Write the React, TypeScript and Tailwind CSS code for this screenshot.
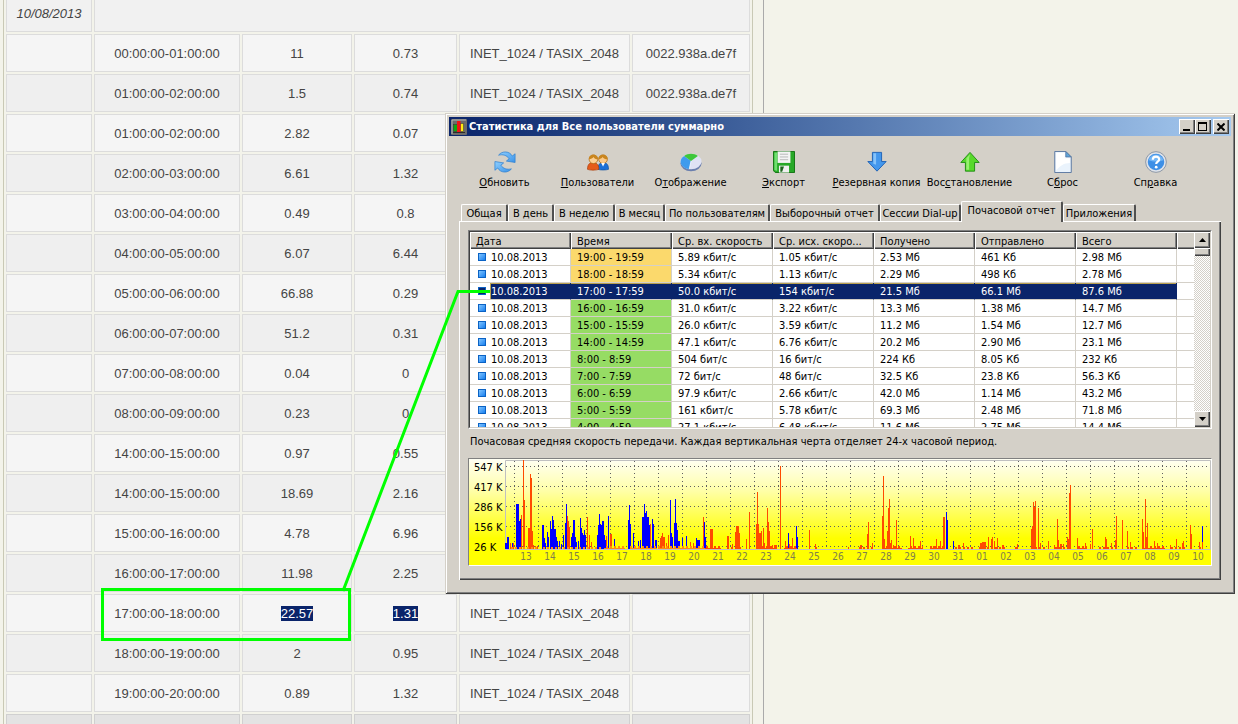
import { useState } from "react";
import type { ReactNode } from "react";

type TrafficRow = {
  time: string;
  incoming: string;
  outgoing: string;
  tariff?: string;
  mac?: string;
  selected?: boolean;
};

const TARIFF = "INET_1024 / TASIX_2048";

const trafficRows: TrafficRow[] = [
  { time: "00:00:00-01:00:00", incoming: "11", outgoing: "0.73", tariff: TARIFF, mac: "0022.938a.de7f" },
  { time: "01:00:00-02:00:00", incoming: "1.5", outgoing: "0.74", tariff: TARIFF, mac: "0022.938a.de7f" },
  { time: "01:00:00-02:00:00", incoming: "2.82", outgoing: "0.07" },
  { time: "02:00:00-03:00:00", incoming: "6.61", outgoing: "1.32" },
  { time: "03:00:00-04:00:00", incoming: "0.49", outgoing: "0.8" },
  { time: "04:00:00-05:00:00", incoming: "6.07", outgoing: "6.44" },
  { time: "05:00:00-06:00:00", incoming: "66.88", outgoing: "0.29" },
  { time: "06:00:00-07:00:00", incoming: "51.2", outgoing: "0.31" },
  { time: "07:00:00-08:00:00", incoming: "0.04", outgoing: "0" },
  { time: "08:00:00-09:00:00", incoming: "0.23", outgoing: "0" },
  { time: "14:00:00-15:00:00", incoming: "0.97", outgoing: "0.55" },
  { time: "14:00:00-15:00:00", incoming: "18.69", outgoing: "2.16" },
  { time: "15:00:00-16:00:00", incoming: "4.78", outgoing: "6.96" },
  { time: "16:00:00-17:00:00", incoming: "11.98", outgoing: "2.25" },
  { time: "17:00:00-18:00:00", incoming: "22.57", outgoing: "1.31", tariff: TARIFF, selected: true },
  { time: "18:00:00-19:00:00", incoming: "2", outgoing: "0.95", tariff: TARIFF },
  { time: "19:00:00-20:00:00", incoming: "0.89", outgoing: "1.32", tariff: TARIFF },
];

const reportColumns = ["Дата", "Время", "Ср. вх. скорость", "Ср. исх. скоро...", "Получено", "Отправлено", "Всего"];

const reportRows = [
  ["10.08.2013", "19:00 - 19:59", "5.89 кбит/с", "1.05 кбит/с", "2.53 Мб", "461 Кб", "2.98 Мб"],
  ["10.08.2013", "18:00 - 18:59", "5.34 кбит/с", "1.13 кбит/с", "2.29 Мб", "498 Кб", "2.78 Мб"],
  ["10.08.2013", "17:00 - 17:59", "50.0 кбит/с", "154 кбит/с", "21.5 Мб", "66.1 Мб", "87.6 Мб"],
  ["10.08.2013", "16:00 - 16:59", "31.0 кбит/с", "3.22 кбит/с", "13.3 Мб", "1.38 Мб", "14.7 Мб"],
  ["10.08.2013", "15:00 - 15:59", "26.0 кбит/с", "3.59 кбит/с", "11.2 Мб", "1.54 Мб", "12.7 Мб"],
  ["10.08.2013", "14:00 - 14:59", "47.1 кбит/с", "6.76 кбит/с", "20.2 Мб", "2.90 Мб", "23.1 Мб"],
  ["10.08.2013", "8:00 - 8:59", "504 бит/с", "16 бит/с", "224 Кб", "8.05 Кб", "232 Кб"],
  ["10.08.2013", "7:00 - 7:59", "72 бит/с", "48 бит/с", "32.5 Кб", "23.8 Кб", "56.3 Кб"],
  ["10.08.2013", "6:00 - 6:59", "97.9 кбит/с", "2.66 кбит/с", "42.0 Мб", "1.14 Мб", "43.2 Мб"],
  ["10.08.2013", "5:00 - 5:59", "161 кбит/с", "5.78 кбит/с", "69.3 Мб", "2.48 Мб", "71.8 Мб"],
  ["10.08.2013", "4:00 - 4:59", "27.1 кбит/с", "6.48 кбит/с", "11.6 Мб", "2.75 Мб", "14.4 Мб"],
];

const SELECTED_ROW = 2;

const tabs = [
  { name: "Общая", width: "w-[47px]" },
  { name: "В день", width: "w-[46px]" },
  { name: "В неделю", width: "w-[61px]" },
  { name: "В месяц", width: "w-[50px]" },
  { name: "По пользователям", width: "w-[105px]" },
  { name: "Выборочный отчет", width: "w-[110px]" },
  { name: "Сессии Dial-up", width: "w-[81px]" },
  { name: "Почасовой отчет", width: "w-[102px]" },
  { name: "Приложения", width: "w-[73px]" },
];

// Hourly bars: [x, height], both from the lower left corner of the plot
const outgoingBars = [
  [0, 6], [1, 6], [2, 12], [3, 12], [7, 6], [11, 45], [12, 45], [13, 45], [14, 28], [15, 30],
  [37, 24], [38, 24], [39, 11], [40, 6], [42, 17], [43, 12], [45, 28], [46, 20], [47, 33], [48, 29],
  [49, 20], [50, 20], [51, 12], [52, 8], [54, 8], [56, 5], [58, 14], [60, 26], [61, 45], [66, 12],
  [67, 16], [68, 29], [69, 29], [70, 12], [71, 7], [73, 8], [75, 31], [76, 21], [77, 16], [78, 14],
  [79, 19], [80, 14], [92, 14], [93, 24], [94, 35], [95, 25], [96, 24], [97, 28], [98, 28], [99, 14],
  [100, 9], [103, 33], [109, 10], [123, 29], [124, 44], [125, 25], [128, 16], [133, 8], [135, 9], [137, 32],
  [138, 32], [139, 45], [140, 36], [141, 38], [142, 32], [143, 32], [144, 24], [147, 30], [148, 25], [150, 9],
  [151, 9], [165, 49], [166, 16], [167, 12], [169, 26], [170, 50], [171, 26], [172, 19], [173, 8], [174, 8],
  [177, 11], [181, 13], [191, 11], [192, 9], [193, 9], [194, 9], [199, 27], [200, 12], [283, 16], [291, 23],
  [292, 12], [441, 37], [442, 29], [448, 8], [697, 23],
];

const incomingBars = [
  [5, 6], [8, 6], [16, 34], [18, 89], [19, 49], [23, 21], [24, 21], [25, 75], [26, 71], [27, 18],
  [28, 4], [30, 3], [32, 3], [62, 33], [63, 28], [64, 22], [82, 32], [84, 14], [86, 7], [101, 13],
  [105, 15], [106, 15], [145, 25], [155, 11], [156, 13], [157, 16], [158, 12], [159, 12], [161, 6], [163, 14],
  [185, 7], [188, 6], [198, 32], [205, 20], [206, 20], [207, 20], [222, 13], [223, 13], [227, 5], [230, 17],
  [231, 23], [232, 23], [233, 23], [234, 16], [241, 10], [244, 37], [251, 25], [252, 57], [253, 25], [254, 16],
  [255, 16], [256, 18], [258, 21], [259, 6], [262, 41], [263, 27], [264, 18], [267, 4], [269, 4], [270, 4],
  [271, 4], [275, 83], [280, 8], [284, 5], [287, 11], [304, 19], [310, 5], [343, 2], [355, 4], [356, 4],
  [362, 15], [363, 27], [367, 6], [377, 33], [378, 73], [379, 10], [382, 18], [383, 41], [384, 50], [385, 6],
  [386, 9], [388, 4], [391, 29], [405, 13], [408, 11], [415, 8], [426, 3], [428, 3], [431, 10], [435, 8],
  [438, 32], [439, 32], [453, 4], [454, 4], [458, 6], [475, 6], [476, 6], [477, 7], [478, 7], [479, 7],
  [480, 7], [483, 12], [486, 10], [487, 12], [489, 8], [492, 11], [497, 4], [498, 4], [512, 5], [526, 20],
  [527, 23], [528, 47], [529, 42], [530, 48], [533, 41], [535, 6], [543, 8], [549, 4], [552, 30], [553, 9],
  [555, 5], [556, 5], [558, 5], [562, 12], [563, 10], [564, 56], [565, 64], [572, 11], [580, 6], [585, 5],
  [587, 20], [600, 12], [601, 10], [606, 6], [610, 9], [611, 33], [617, 29], [622, 18], [625, 7], [637, 30],
  [638, 17], [640, 50], [641, 12], [642, 26], [649, 8], [652, 6], [665, 4], [671, 10], [677, 6], [678, 8],
  [685, 24], [686, 15], [694, 7], [697, 7],
];

// Background traffic ranges drawn as a low strip along the axis: [from, to]
const quietRanges = [
  [4, 34], [36, 98], [99, 120], [125, 152], [153, 216], [222, 236], [251, 272], [279, 292], [308, 313], [354, 369],
  [377, 397], [403, 418], [425, 440], [450, 468], [474, 500], [508, 514], [524, 541], [548, 566], [573, 582], [594, 612],
  [620, 632], [637, 660], [664, 682], [692, 698],
];

const days = [
  "13", "14", "15", "16", "17", "18", "19", "20", "21", "22", "23", "24", "25", "26", "27",
  "28", "29", "30", "31", "01", "02", "03", "04", "05", "06", "07", "08", "09", "10",
];

const RefreshIcon = () => (
  <svg viewBox="0 0 24 24" className="size-[22px]" aria-hidden="true">
    <defs>
      <linearGradient id="refresh" x1="0" y1="0" x2="1" y2="1">
        <stop offset="0" stopColor="#8fd0ff" />
        <stop offset="1" stopColor="#3c93e8" />
      </linearGradient>
    </defs>
    <g fill="url(#refresh)" stroke="#2d7fd0" strokeWidth="0.8" strokeLinejoin="round">
      <path d="M5 4.500C9 -0.500 17 0 20 5.500L23 3V12.500L13.500 11L16.500 8.500C14 4.500 9.500 3.500 5 4.500Z" />
      <path d="M19 19.500C15 24.500 7 24 4 18.500L1 21V11.500L10.500 13L7.500 15.500C10 19.500 14.500 20.500 19 19.500Z" />
    </g>
  </svg>
);

const UsersIcon = () => (
  <svg viewBox="0 0 24 24" className="size-[22px]" aria-hidden="true">
    <path d="M12 20C12 14 14.500 12.500 17.500 12.500S23.500 14 23.500 20C21 21 14 21 12 20Z" fill="#1c6fd6" stroke="#0e4f9f" strokeWidth="0.700" />
    <circle cx="17.500" cy="9" r="4.700" fill="#fbc98a" stroke="#a8660c" strokeWidth="0.800" />
    <path d="M12.700 9C12 2.500 23 2.500 22.300 9C20 9 18 8 17 6.500C16 8 14.500 8.800 12.700 9Z" fill="#c9861f" />
    <path d="M15.500 13L17.500 17L19.500 13Z" fill="#fff" />
    <path d="M0.500 20C0.500 14 3.500 12.500 6.500 12.500S13 14 13 20C10 21.200 3 21.200 0.500 20Z" fill="#e55b1a" stroke="#a83a0a" strokeWidth="0.700" />
    <circle cx="7" cy="9" r="4.700" fill="#fdcf94" stroke="#a8660c" strokeWidth="0.800" />
    <path d="M2.200 9C1.500 2.500 12.500 2.500 11.800 9C9.500 9 8 8 7 6.500C6 8 4.500 8.800 2.200 9Z" fill="#c9861f" />
  </svg>
);

const PieIcon = () => (
  <svg viewBox="0 0 24 24" className="size-[22px]" aria-hidden="true">
    <ellipse cx="12" cy="13.500" rx="11.500" ry="8.500" fill="#6b7fae" />
    <ellipse cx="12" cy="11.500" rx="11.500" ry="8.500" fill="#dfe2f4" />
    <path d="M12 11L4.500 5.500C-1.500 9 -1 18 10 20Z" fill="#3f9bee" />
    <path d="M12 11L4.500 5.500C8 2 16 2 19.500 5.500Z" fill="#3ec73a" />
    <path d="M12 11L10 20" stroke="#fff" strokeWidth="0.800" />
  </svg>
);

const SaveIcon = () => (
  <svg viewBox="0 0 24 24" className="size-[22px]" aria-hidden="true">
    <path d="M0.500 0.500H23.500V23.500H2.500L0.500 21.500Z" fill="#27a827" stroke="#0c6f0c" strokeWidth="1" />
    <path d="M1.500 1.500H4.500V21.500H3L1.500 20Z" fill="#6fe06f" />
    <rect x="5" y="0.500" width="14" height="12.500" fill="#f4f4f4" />
    <path d="M7.500 3.500H16.500M7.500 6.500H16.500M7.500 9.500H16.500" stroke="#b5b5b5" />
    <rect x="6.500" y="16" width="11" height="7.500" fill="#f0f0f0" />
    <path d="M8 17H12L10 22.500H8Z" fill="#1b641b" />
  </svg>
);

const ArrowIcon = ({ up }: { up?: boolean }) => (
  <svg viewBox="0 0 24 24" className="size-[22px]" aria-hidden="true">
    {up ? (
      <path d="M12 1.500L22 12.500H17V22H7V12.500H2Z" fill="#57d92b" stroke="#1d8a10" strokeLinejoin="round" />
    ) : (
      <path d="M12 22L22 11.500H17V1.500H7V11.500H2Z" fill="#4497ec" stroke="#1c5fb4" strokeLinejoin="round" />
    )}
    {up ? (
      <path d="M12 3.500L8 8V20.500H11V8Z" fill="#97ef70" />
    ) : (
      <path d="M8 2.500H11V15L8 14Z" fill="#86c3fa" />
    )}
  </svg>
);

const PageIcon = () => (
  <svg viewBox="0 0 24 24" className="size-[22px]" aria-hidden="true">
    <path d="M3 0.500H15L21 6.500V23.500H3Z" fill="#eaf3fc" stroke="#52719c" />
    <path d="M4.500 2H14V8H19.500V13C13 13 9 16 4.500 21Z" fill="#fff" />
    <path d="M15 0.500V6.500H21Z" fill="#5ea5d8" stroke="#52719c" strokeWidth="0.800" />
  </svg>
);

const HelpIcon = () => (
  <svg viewBox="0 0 24 24" className="size-[22px]" aria-hidden="true">
    <circle cx="12" cy="12" r="11.300" fill="#dfe3ea" stroke="#8793a3" />
    <circle cx="12" cy="12" r="9" fill="#3d8fe6" />
    <path d="M4 10C6 2 18 2 20 10C15 12 9 12 4 10Z" fill="#72b6f6" />
    <path d="M8.500 9.500C8.500 5 15.500 5 15.500 9.200C15.500 11.500 12.200 11.800 12.200 14.200" fill="none" stroke="#fff" strokeWidth="2.400" />
    <circle cx="12.200" cy="17.600" r="1.500" fill="#fff" />
  </svg>
);

// `key` of each label is the letter underlined as its accelerator
const tools: { before: string; key: string; after: string; icon: ReactNode }[] = [
  { before: "", key: "О", after: "бновить", icon: <RefreshIcon /> },
  { before: "", key: "П", after: "ользователи", icon: <UsersIcon /> },
  { before: "О", key: "т", after: "ображение", icon: <PieIcon /> },
  { before: "", key: "Э", after: "кспорт", icon: <SaveIcon /> },
  { before: "", key: "Р", after: "езервная копия", icon: <ArrowIcon /> },
  { before: "Вос", key: "с", after: "тановление", icon: <ArrowIcon up /> },
  { before: "С", key: "б", after: "рос", icon: <PageIcon /> },
  { before: "Сп", key: "р", after: "авка", icon: <HelpIcon /> },
];

const TrafficTable = () => {
  const cell = "h-[38px] border px-0 pt-[2px] pb-0 text-center";

  return (
    <div className="ml-[3px] w-[750px] shrink-0 border-x border-[#c9c9b5]">
      <table className="-mt-2 w-full table-fixed border-separate border-spacing-[2px] text-[13px] text-[#444]">
        <colgroup>
          <col className="w-[86px]" />
          <col className="w-[146px]" />
          <col className="w-[110px]" />
          <col className="w-[103px]" />
          <col className="w-[171px]" />
          <col />
        </colgroup>
        <tbody>
          <tr className="bg-[#f1f1f1]">
            <td className={`${cell} border-[#dcdcdc] italic`}>10/08/2013</td>
            <td className={`${cell} border-[#dcdcdc]`} colSpan={5} />
          </tr>
          {trafficRows.map((row, i) => (
            <tr key={i} className="odd:bg-[#efefef] even:bg-[#f5f5f5]">
              <td className={`${cell} border-[#dcdcdc]`} />
              <td className={`${cell} border-[#dcdcdc]`}>{row.time}</td>
              {[row.incoming, row.outgoing].map((value, j) => (
                <td key={j} className={`${cell} border-[#dcdcdc]`}>
                  <span className={row.selected ? "bg-[#0a246a] text-white" : ""}>{value}</span>
                </td>
              ))}
              <td className={`${cell} border-[#dcdcdc]`}>{row.tariff}</td>
              <td className={`${cell} border-[#dcdcdc]`}>{row.mac}</td>
            </tr>
          ))}
          <tr className="bg-[#e3e3e3]">
            {[0, 1, 2, 3, 4, 5].map((i) => (
              <td key={i} className={`${cell} border-[#d0d0d0]`} />
            ))}
          </tr>
        </tbody>
      </table>
    </div>
  );
};

const raised =
  "bg-[#d4d0c8] shadow-[inset_1px_1px_0_#fff,inset_-1px_-1px_0_#404040,inset_-2px_-2px_0_#808080]";

const TitleBar = () => (
  <div className="flex h-[19px] items-center bg-linear-to-r from-[#0a246a] to-[#a6caf0] pr-[2px] pl-[2px]">
    <svg viewBox="0 0 16 16" className="size-4 shrink-0" aria-hidden="true">
      <rect width="16" height="16" rx="1" fill="#6b6b6b" />
      <path d="M1 15V1H15" fill="none" stroke="#b5b5b5" />
      <rect x="2.500" y="5.500" width="4" height="7" fill="#0fa80f" stroke="#333" strokeWidth="0.500" />
      <rect x="9.500" y="4.500" width="3" height="8" fill="#ffee12" stroke="#333" strokeWidth="0.500" />
      <rect x="6" y="2" width="3.500" height="11" fill="#f01414" />
      <path d="M2 13.500H14" stroke="#2c2c2c" />
    </svg>
    <h1 className="ml-[2px] flex-1 pt-px text-[11px] leading-4 font-bold whitespace-nowrap text-white">
      Статистика для Все пользователи суммарно
    </h1>
    <button aria-label="Свернуть" className={`flex h-[15px] w-4 items-end pb-[3px] pl-1 ${raised}`}>
      <span className="h-[2px] w-[7px] bg-black" />
    </button>
    <button aria-label="Развернуть" className={`flex h-[15px] w-4 items-center justify-center pr-px ${raised}`}>
      <span className="h-[9px] w-[9px] border border-t-2 border-black" />
    </button>
    <button aria-label="Закрыть" className={`ml-[2px] flex h-[15px] w-4 items-center justify-center pr-px ${raised}`}>
      <svg viewBox="0 0 8 8" className="size-2" aria-hidden="true">
        <path d="M0.500 0.500L7.500 7.500M7.500 0.500L0.500 7.500" stroke="#000" strokeWidth="2" />
      </svg>
    </button>
  </div>
);

const ScrollBar = () => (
  <div className="flex w-4 shrink-0 flex-col bg-[repeating-conic-gradient(#fff_0_25%,#d4d0c8_0_50%)] bg-[length:2px_2px]">
    <button aria-label="Вверх" className={`flex h-4 items-center justify-center ${raised}`}>
      <svg viewBox="0 0 7 4" className="h-1 w-[7px]" aria-hidden="true">
        <path d="M0 4L3.500 0L7 4Z" />
      </svg>
    </button>
    <div className={`h-2 ${raised}`} />
    <button aria-label="Вниз" className={`mt-auto flex h-4 items-center justify-center ${raised}`}>
      <svg viewBox="0 0 7 4" className="h-1 w-[7px]" aria-hidden="true">
        <path d="M0 0L3.500 4L7 0Z" />
      </svg>
    </button>
  </div>
);

const timeColor = (row: number) => (row < SELECTED_ROW ? "bg-[#fbd96c]" : "bg-[#96dc64]");

const ReportList = () => (
  <div className="flex h-[199px] overflow-hidden border border-t-[#808080] border-r-white border-b-white border-l-[#808080] bg-white">
    <div className="flex min-w-0 flex-1 overflow-hidden border border-t-[#404040] border-r-[#d4d0c8] border-b-[#d4d0c8] border-l-[#404040]">
      <div className="min-w-0 flex-1">
        <table className="w-full table-fixed border-separate border-spacing-0 text-[11px] leading-[15px] whitespace-nowrap">
          <thead>
            <tr>
              {reportColumns.map((name) => (
                <th
                  key={name}
                  className="h-[17px] w-[101px] bg-[#d4d0c8] p-0 pt-px pl-[6px] text-left font-normal shadow-[inset_1px_1px_0_#fff,inset_-1px_-1px_0_#404040,inset_-2px_-2px_0_#808080]"
                >
                  {name}
                </th>
              ))}
              <th className="bg-[#d4d0c8] p-0 shadow-[inset_1px_1px_0_#fff,inset_0_-1px_0_#404040,inset_0_-2px_0_#808080]" />
            </tr>
          </thead>
          <tbody>
            {reportRows.map((row, i) => {
              const selected = i === SELECTED_ROW;
              return (
                <tr key={i}>
                  {row.map((value, j) =>
                    j === 0 ? (
                      <td
                        key={j}
                        className={`border-r border-b border-b-[#d4d0c8] p-0 ${
                          selected ? "border-r-[#0a246a]" : "border-r-[#d4d0c8]"
                        }`}
                      >
                        <div className="flex items-center">
                          <span className="flex w-5 shrink-0 justify-center pl-1">
                            <span
                              className={`size-2 border border-[#0b62c4] ${
                                selected
                                  ? "bg-[#0a246a]"
                                  : "bg-linear-to-br from-[#7cc4ff] to-[#0c7fee]"
                              }`}
                            />
                          </span>
                          <span
                            className={`flex-1 pt-px pl-px ${
                              selected
                                ? "bg-[#0a246a] text-white shadow-[inset_1px_1px_0_#b9a050]"
                                : ""
                            }`}
                          >
                            {value}
                          </span>
                        </div>
                      </td>
                    ) : (
                      <td
                        key={j}
                        className={`border-r border-b border-b-[#d4d0c8] p-0 pt-px pl-[6px] ${
                          selected
                            ? "border-r-[#0a246a] bg-[#0a246a] text-white shadow-[inset_0_1px_0_#b9a050]"
                            : "border-r-[#d4d0c8]"
                        } ${!selected && j === 1 ? timeColor(i) : ""}`}
                      >
                        {value}
                      </td>
                    ),
                  )}
                  <td className="border-b border-[#d4d0c8] p-0" />
                </tr>
              );
            })}
          </tbody>
        </table>
      </div>
      <ScrollBar />
    </div>
  </div>
);

const bars = (data: number[][]) => data.map(([x, h]) => `M${36 + x} ${90 - h}h1V90h-1Z`).join("");

const quietStrip = quietRanges
  .flatMap(([from, to]) =>
    Array.from({ length: to - from }, (_, i) => [from + i, ((from + i) * 7 + i * i) % 4]),
  )
  .filter(([, h]) => h > 0);

const SpeedChart = () => (
  <div className="border border-t-[#808080] border-r-white border-b-white border-l-[#808080]">
    <svg viewBox="0 0 742 106" className="block w-full" role="img" aria-label="Почасовая средняя скорость">
      <defs>
        <linearGradient id="sky" x1="0" y1="0" x2="0" y2="1">
          <stop offset="0" stopColor="#fffff4" />
          <stop offset="0.3" stopColor="#ffffa8" />
          <stop offset="0.75" stopColor="#ffff00" />
        </linearGradient>
      </defs>
      <rect width="742" height="106" fill="url(#sky)" />
      <path d="M36.500 90.500V1.500H741.500V90.500Z" fill="none" stroke="#c0c0c0" />
      <g stroke="#606060" strokeDasharray="1 3" shapeRendering="crispEdges">
        {[7, 27, 47, 67, 87].map((y) => (
          <line key={y} x1="37" x2="741" y1={y + 0.5} y2={y + 0.5} />
        ))}
        {days.map((day, i) => (
          <line key={day} x1={45.5 + i * 24} x2={45.5 + i * 24} y1="2" y2="90" />
        ))}
      </g>
      <g shapeRendering="crispEdges">
        <path d={bars(outgoingBars)} fill="#0000ff" />
        <path d={bars(incomingBars)} fill="#ff4a00" />
        <path d={bars(quietStrip.filter(([x]) => x < 200))} fill="#ff8c10" />
        <path d={bars(quietStrip.filter(([x]) => x >= 200))} fill="#ff4a00" />
      </g>
      <g className="text-[11px]">
        {["547 K", "417 K", "286 K", "156 K", "26 K"].map((label, i) => (
          <text key={label} x="5" y={12 + i * 20}>
            {label}
          </text>
        ))}
      </g>
      <g className="text-[10px]" fill="#80804c" textAnchor="middle">
        {days.map((day, i) => (
          <text key={day} x={57 + i * 24} y="101">
            {day}
          </text>
        ))}
      </g>
    </svg>
  </div>
);

const StatisticsWindow = () => {
  const [activeTab, setActiveTab] = useState("Почасовой отчет");

  return (
    <section className="absolute top-[113px] right-[3px] left-[445px] bg-[#d4d0c8] p-1 font-['DejaVu_Sans_Condensed','DejaVu_Sans',sans-serif] text-black shadow-[inset_1px_1px_0_#d4d0c8,inset_-1px_-1px_0_#404040,inset_2px_2px_0_#fff,inset_-2px_-2px_0_#808080]">
      <TitleBar />

      {/* Toolbar */}
      <div className="flex pt-[15px] pl-[9px]">
        {tools.map((tool) => (
          <button key={tool.after} className="flex w-[93px] flex-col items-center gap-[2px] text-[11px] leading-4 whitespace-nowrap">
            {tool.icon}
            <span>
              {tool.before}
              <u>{tool.key}</u>
              {tool.after}
            </span>
          </button>
        ))}
      </div>

      <div className="px-[10px] pt-[10px] pb-[10px]">
        {/* Tabs */}
        <div role="tablist" className="flex h-5 items-end pl-[2px]">
          {tabs.map((tab) => {
            const active = tab.name === activeTab;
            return (
              <button
                key={tab.name}
                role="tab"
                aria-selected={active}
                onClick={() => setActiveTab(tab.name)}
                className={`${tab.width} shrink-0 rounded-t-[2px] border-t border-r-2 border-l border-t-white border-r-[#505050] border-l-white bg-[#d4d0c8] text-[11px] leading-4 whitespace-nowrap ${
                  active ? "relative z-10 -mb-px h-[21px] pb-[2px]" : "h-[17px] pt-px"
                }`}
              >
                <span className="flex justify-center">{tab.name}</span>
              </button>
            );
          })}
        </div>

        {/* Tab page */}
        <div className="px-[9px] pt-[9px] pb-[14px] shadow-[inset_1px_1px_0_#fff,inset_-1px_-1px_0_#404040,inset_-2px_-2px_0_#808080]">
          <ReportList />
          <p className="pt-[5px] pb-2 pl-[2px] text-[11px] leading-4 whitespace-nowrap">
            Почасовая средняя скорость передачи. Каждая вертикальная черта отделяет 24-х часовой период.
          </p>
          <SpeedChart />
        </div>
      </div>
    </section>
  );
};

const App = () => (
  <main className="relative flex h-screen overflow-hidden bg-[#f3f3ea] font-['Liberation_Sans',Arial,sans-serif]">
    <TrafficTable />
    <div className="ml-[10px] flex-1 border-l border-[#aaa]" />
    <StatisticsWindow />

    {/* Callout joining the 17:00 row of both reports */}
    <svg
      viewBox="0 0 400 360"
      className="pointer-events-none absolute top-[285px] left-[100px] h-[360px] w-[400px]"
      fill="none"
      stroke="#00ff00"
      strokeWidth="3"
      aria-hidden="true"
    >
      <rect x="2.500" y="304.500" width="247" height="50" />
      <path d="M243 306L358 6.500H390" />
    </svg>
  </main>
);

export default App;
